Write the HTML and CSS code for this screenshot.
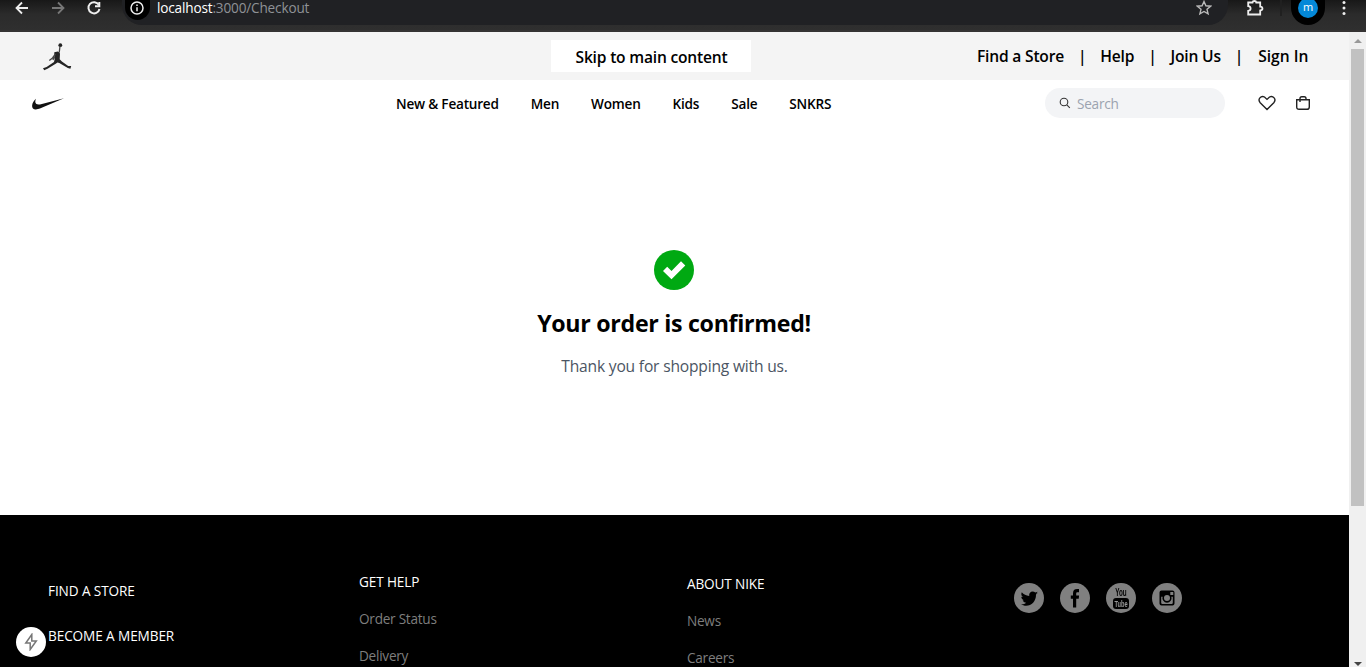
FILE: index.html
```html
<!DOCTYPE html>
<html lang="en">
<head>
<meta charset="utf-8">
<title>Checkout</title>
<link rel="stylesheet" href="styles.css">
</head>
<body>
<header class="browser">
  <svg class="tool back" viewBox="0 0 16 16"><path d="M14 8H3M8 2.500L2.500 8 8 13.500"/></svg>
  <svg class="tool forward" viewBox="0 0 16 16"><path d="M2 8h11M8 2.500L13.500 8 8 13.500"/></svg>
  <svg class="tool reload" viewBox="0 0 16 16"><path d="M12.800 4.800A5.600 5.600 0 1 0 13.500 9"/><path d="M13.300 2v4.200H9"/></svg>
  <div class="address">
    <span class="info"><svg viewBox="0 0 14 14"><circle cx="7" cy="7" r="6"/><path d="M7 6.300v4M7 3.500v1.600"/></svg></span>
    <span class="url"><b>localhost</b>:3000/Checkout</span>
    <svg class="star" viewBox="0 0 16 16"><path d="M8 1.500l1.900 4.300 4.700.4-3.600 3.100 1.100 4.600L8 11.500l-4.100 2.400L5 9.300 1.400 6.200l4.700-.4z"/></svg>
  </div>
  <svg class="puzzle" viewBox="0 0 18 18"><path d="M2.200 3.500h4.300c.2-2 3.600-2 3.800 0h3.900v4.100c3 .3 3 3.600 0 3.900v4H2.200v-3.700c3.200-.4 3.200-4.200 0-4.600z"/></svg>
  <span class="divider"></span>
  <span class="profile"><span class="avatar">m</span></span>
  <svg class="dots" viewBox="0 0 4 16"><circle cx="2" cy="2.500" r="1.500"/><circle cx="2" cy="8" r="1.500"/><circle cx="2" cy="13.500" r="1.500"/></svg>
</header>
<div class="viewport">
  <div class="page">
    <div class="topbar">
      <svg class="jordan" viewBox="0 0 30 30"><circle cx="18.300" cy="3.200" r="1.900"/><path class="arm" d="M18 4l-.7 6-2.600 3"/><path d="M12.300 10.200l3.500-.8 2.200 2-.3 5.800 2.200 2.200 6.300 4.500 3 .2-.8 2.600-2.600-.6-8.500-5.200-1.800-.5-1.800 1.300-8.200 5-3.300 1.500-1.200-2 3.600-1.100 7.400-5.200.6-2.300-.3-3.400z"/><path class="arm" d="M13.500 12l-3 4-3.200 2.500M12.500 15l-1.600 3"/></svg>
      <a class="skip">Skip to main content</a>
      <nav class="account"><a>Find a Store</a><i>|</i><a>Help</a><i>|</i><a>Join Us</a><i>|</i><a class="signin">Sign In</a></nav>
    </div>
    <div class="navbar">
      <svg class="swoosh" viewBox="0 0 34 14"><path d="M33 1.200L9.500 11.300C3.600 13.700 1 11.900 1.100 8.700 1.200 6.200 2.800 3.500 5 1.800 3.700 4.500 3.900 8.300 9 7.400z"/></svg>
      <nav class="menu"><a>New &amp; Featured</a><a>Men</a><a>Women</a><a>Kids</a><a>Sale</a><a>SNKRS</a></nav>
      <div class="search"><svg viewBox="0 0 12 12"><circle cx="5" cy="5" r="3.800"/><path d="M7.800 7.800l3 3"/></svg><span>Search</span></div>
      <svg class="heart" viewBox="0 0 18 16"><path d="M9 14.500L2.200 7.700C-.8 4.300 3 .2 6.500 2L9 4.400 11.500 2C15 .2 18.800 4.300 15.800 7.700z"/></svg>
      <svg class="bag" viewBox="0 0 16 16"><path d="M1.700 4.700h12.600v7.200q0 2.400-2.400 2.400H4.100q-2.400 0-2.400-2.400zM5 7V3.500Q5 1.700 6.800 1.700h2.400Q11 1.700 11 3.500V4.700"/></svg>
    </div>
    <main class="confirm">
      <svg class="check" viewBox="0 0 40 40"><circle cx="20" cy="20" r="20"/><path d="M9 21l4.200-4.300 4.300 4.300L27 11.200l4.300 4.300-13.800 13.800z"/></svg>
      <h1>Your order is confirmed!</h1>
      <p>Thank you for shopping with us.</p>
    </main>
    <footer class="footer">
      <ul class="col stores"><li>FIND A STORE</li><li>BECOME A MEMBER</li></ul>
      <ul class="col help"><li class="head">GET HELP</li><li>Order Status</li><li>Delivery</li></ul>
      <ul class="col about"><li class="head">ABOUT NIKE</li><li>News</li><li>Careers</li></ul>
      <div class="social">
        <svg viewBox="0 0 30 30"><circle cx="15" cy="15" r="15"/><path class="ink" d="M24 9.400l-2 2.200c.2 6.800-4.500 11.200-9.800 11.200-2 0-3.800-.6-5.200-1.500 2 .2 3.800-.4 5.100-1.500-1.600 0-2.900-1.100-3.400-2.500h1.500c-1.700-.5-2.900-1.900-2.900-3.600l1.600.4c-1.600-1.200-2-3.200-1.100-4.900 1.800 2.200 4.400 3.500 7.400 3.700-.6-4.400 3.900-5.700 6.100-3.300l2.300-.9-1.500 2z"/></svg>
        <svg viewBox="0 0 30 30"><circle cx="15" cy="15" r="15"/><path class="ink" d="M13 24.500V15.700h-2.200v-3.300H13v-2C13 7.500 14.300 6 17.200 6H19v3.300h-1.500c-1.100 0-1.300.5-1.300 1.500v1.600h2.900l-.4 3.300h-2.500v8.800z"/></svg>
        <svg class="youtube" viewBox="0 0 30 30"><circle cx="15" cy="15" r="15"/><text class="ink" transform="translate(15 13) scale(.6 1.080)">You</text><rect class="ink" x="7" y="15" width="16" height="11" rx="3"/><text class="tube" transform="translate(15 24) scale(.6 1)">Tube</text></svg>
        <svg viewBox="0 0 30 30"><circle cx="15" cy="15" r="15"/><path class="ink" fill-rule="evenodd" d="M9.500 7.500h11q2 0 2 2v11q0 2-2 2h-11q-2 0-2-2v-11q0-2 2-2zM18.300 9v3h3V9zM9.200 13.700v6q0 1.200 1.200 1.200h9.200q1.200 0 1.200-1.200v-6h-1.400a4.600 4.600 0 1 1-8.800 0zM15 12a3 3 0 1 0 0 6 3 3 0 0 0 0-6z"/></svg>
      </div>
    </footer>
    <span class="devtool"><svg viewBox="0 0 14 18"><path d="M7.800 1.500L1.800 10h4.400v6.500L12.300 8H7.800z"/></svg></span>
  </div>
  <div class="scrollbar"><span class="up"></span><span class="thumb"></span><span class="down"></span></div>
</div>
</body>
</html>
```
FILE: styles.css
```css
* { box-sizing: border-box; }
body { margin: 0; height: 667px; overflow: hidden; font-family: "Open Sans", "Noto Sans", sans-serif; color: #000; background: #fff; }
svg { display: block; flex: none; }
ul { list-style: none; margin: 0; padding: 0; }
a, span, li, h1, p { white-space: nowrap; }

.browser { height: 32px; display: flex; align-items: flex-start; background: linear-gradient(#181818, #2b2b2b 45%, #2f2f2f 93%, #353333 94%); }
.tool { width: 16px; height: 16px; fill: none; stroke: #eee; stroke-width: 1.8; }
.back { margin-left: 14px; }
.forward { margin-left: 20px; stroke: #777; }
.reload { margin-left: 20px; stroke-width: 2; }
.address { width: 1106px; height: 25px; margin-left: 20px; display: flex; background: #202124; border-radius: 0 0 20px 20px; }
.info { width: 25px; height: 20px; margin-left: 3px; padding: 1px 5px; background: #000; border-radius: 0 0 13px 13px; }
.info svg { width: 14px; height: 14px; fill: none; stroke: #eee; stroke-width: 1.5; }
.url { margin-left: 7px; width: 1041px; font-size: 13.6px; letter-spacing: -.17px; line-height: 16px; color: #8f9296; }
.url b { color: #fff; font-weight: 400; }
.star { width: 16px; height: 16px; margin-left: -2px; fill: none; stroke: #bbb; stroke-width: 1.4; }
.puzzle { width: 18px; height: 18px; margin: -1px 0 0 18px; fill: none; stroke: #eee; stroke-width: 1.8; }
.divider { width: 2px; height: 16px; margin-left: 16px; background: #202020; }
.profile { width: 34px; height: 25px; margin-left: 9px; display: flex; justify-content: center; background: #000; border-radius: 0 0 17px 17px; }
.avatar { width: 20px; height: 20px; margin-top: -2px; background: #0488d8; border-radius: 50%; color: #fff; font-size: 11px; line-height: 18px; text-align: center; }
.dots { width: 4px; height: 16px; margin-left: 17px; fill: #eee; }

.viewport { height: 635px; display: flex; }
.page { width: 1349px; position: relative; overflow: hidden; }
.topbar { height: 48px; background: #f4f4f4; display: flex; align-items: center; font-size: 15.6px; letter-spacing: -.2px; font-weight: 600; }
.jordan { width: 30px; height: 30px; margin: 2px 0 0 42px; }
.jordan path, .jordan circle { fill: #242424; }
.jordan .arm { fill: none; stroke: #444; stroke-width: 1.3; }
.skip { width: 200px; height: 32px; margin-left: 479px; padding-left: 1px; line-height: 34px; text-align: center; background: #fff; }
.account { margin-left: 226px; display: flex; line-height: 34px; }
.account i { width: 36.300px; text-align: center; font-style: normal; }
.signin { letter-spacing: 0; margin-left: 1px; }

.navbar { height: 48px; display: flex; align-items: center; }
.swoosh { width: 34px; height: 14px; margin: -1px 0 0 31px; fill: #111; }
.menu { width: 649px; margin: -2px 0 0 331px; display: flex; gap: 32px; font-size: 13.6px; letter-spacing: -.22px; font-weight: 600; }
.search { width: 180px; height: 30px; margin-top: -2px; padding-left: 14px; display: flex; align-items: center; gap: 6px; border-radius: 15px; background: #f3f4f6; font-size: 13.6px; letter-spacing: -.25px; color: #9ca3af; }
.search svg { width: 12px; height: 12px; fill: none; stroke: #333; stroke-width: 1.1; }
.heart { width: 18px; height: 16px; margin: -2px 0 0 33px; fill: none; stroke: #222; stroke-width: 1.4; }
.bag { width: 16px; height: 16px; margin: -2px 0 0 19px; fill: none; stroke: #222; stroke-width: 1.4; }

.confirm { height: 387px; padding: 122px 1px 0 0; display: flex; flex-direction: column; align-items: center; }
.check { width: 40px; height: 40px; fill: #00a912; }
.check path { fill: #fff; }
.confirm h1 { margin: 15px 0 0; font-size: 23.2px; letter-spacing: -.3px; line-height: 36px; }
.confirm p { margin: 13px 0 0 1px; font-size: 15.6px; letter-spacing: -.19px; line-height: 24px; color: #4b5563; }

.footer { height: 152px; display: flex; background: #000; color: #fff; font-size: 13.6px; letter-spacing: -.25px; line-height: 20px; }
.col { display: flex; flex-direction: column; gap: 17px; color: #7e7e7e; }
.stores { width: 311px; margin-left: 48px; padding-top: 66px; gap: 25px; color: #fff; letter-spacing: -.1px; }
.help { width: 328px; padding-top: 57px; }
.about { width: 327px; padding-top: 59px; }
.head { color: #fff; letter-spacing: -.13px; }
.social { display: flex; gap: 16px; padding-top: 68px; letter-spacing: 0; }
.social svg { width: 30px; height: 30px; fill: #808080; }
.social .ink { fill: #000; }
.social text { font: 700 10.5px "Liberation Sans", sans-serif; text-anchor: middle; }
.social .tube { fill: #999; font-size: 9.5px; }
.social .youtube { will-change: transform; }
.devtool { position: absolute; left: 16px; bottom: 10px; width: 30px; height: 30px; display: flex; align-items: center; justify-content: center; background: #fff; border-radius: 50%; }
.devtool svg { width: 14px; height: 18px; fill: none; stroke: #777; stroke-width: 1.5; }

.scrollbar { width: 17px; background: #f0f0f0; display: flex; flex-direction: column; align-items: center; }
.up { margin-top: 7px; border: 4px solid transparent; border-top: 0; border-bottom-color: #999; }
.thumb { width: 13px; height: 457px; margin-top: 6px; background: #c1c1c1; }
.down { margin-top: auto; margin-bottom: 1px; border: 4px solid transparent; border-bottom: 0; border-top-color: #444; }
```
